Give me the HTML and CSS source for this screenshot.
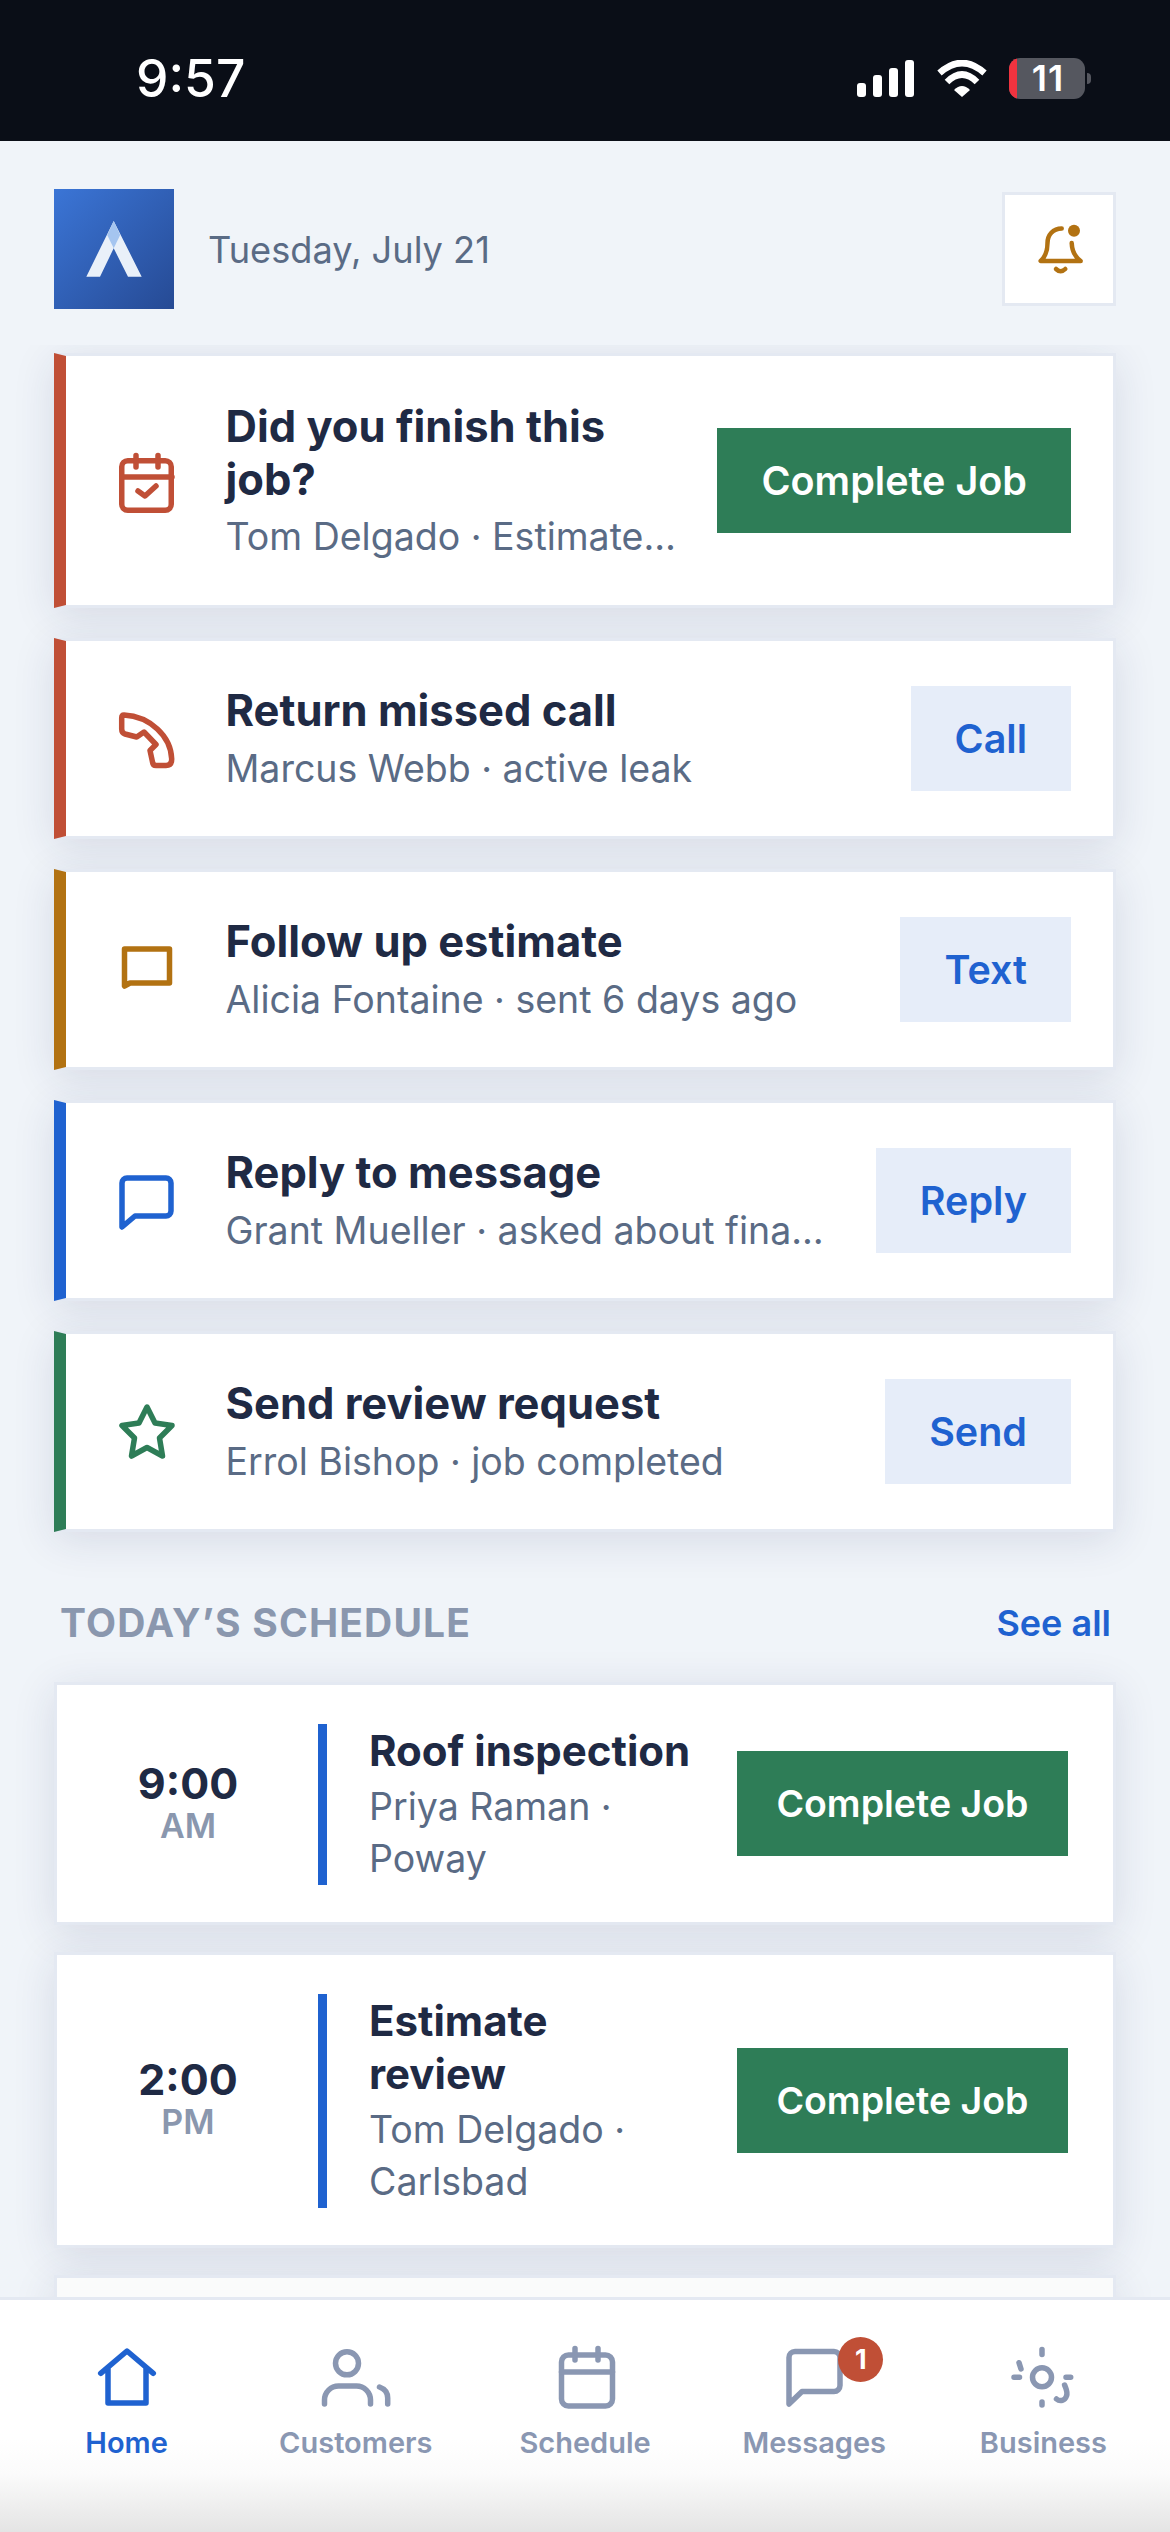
FILE: index.html
```html
<!DOCTYPE html>
<html lang="en">
<head>
    <meta charset="UTF-8">
    <meta name="viewport" content="width=device-width, initial-scale=1.0">
    <title>Home</title>
    <link rel="stylesheet" href="styles.css">
</head>
<body>
    <div class="statusbar">
        <span class="clock">9:57</span>
        <div class="status-icons">
            <div class="signal">
                <span class="bar bar1"></span>
                <span class="bar bar2"></span>
                <span class="bar bar3"></span>
                <span class="bar bar4"></span>
            </div>
            <svg class="wifi" width="50" height="37" viewBox="0 0 50 37">
                <path d="M2.5 13 Q25 -7 47.5 13" fill="none" stroke="#fff" stroke-width="6.5"/>
                <path d="M10 22 Q25 7 40 22" fill="none" stroke="#fff" stroke-width="6.5"/>
                <path d="M17 30 Q25 22 33 30 L25 37 Z" fill="#fff"/>
            </svg>
            <div class="battery"><span class="battery-low"></span><span class="battery-num">11</span></div>
            <span class="battery-nub"></span>
        </div>
    </div>

    <div class="header">
        <svg class="logo" width="120" height="120" viewBox="0 0 120 120">
            <defs>
                <linearGradient id="logoBg" x1="0" y1="0" x2="1" y2="1">
                    <stop offset="0" stop-color="#3b75d6"/>
                    <stop offset="1" stop-color="#264a94"/>
                </linearGradient>
            </defs>
            <rect width="120" height="120" fill="url(#logoBg)"/>
            <path d="M59.7 32 L87.7 87.7 H74 L59.7 59.3 L46 87.7 H32.3 Z" fill="#e9f0f9"/>
            <path d="M59.7 32 L66.2 46 L59.7 59.3 L53.2 46 Z" fill="#a5c5f0"/>
        </svg>
        <span class="date">Tuesday, July 21</span>
        <div class="bell-box">
            <svg class="ic bell amber" width="66" height="66" viewBox="0 0 66 66">
                <path d="M35.7 12.5 C27 12.5 21.5 19 21.5 27 C21.5 36 18 42 14.7 45 H54.7 C49 41 46 34 45.7 27"/>
                <path d="M30 53 Q34.7 57.5 39.3 53"/>
                <circle class="solid" cx="48" cy="14.7" r="6"/>
            </svg>
        </div>
    </div>

    <div class="content">
        <div class="task task-first red">
            <svg class="ic" width="66" height="66" viewBox="0 0 66 66">
                <rect x="7.75" y="12.75" width="49.5" height="49.5" rx="6"/>
                <path d="M22 7.5 V19 M44 7.5 V19 M8 29 H58"/>
                <path d="M24 43 L31 48 L42 38"/>
            </svg>
            <div class="info">
                <div class="title">Did you finish this job?</div>
                <div class="sub">Tom Delgado · Estimate review</div>
            </div>
            <button class="btn btn-green">Complete Job</button>
        </div>

        <div class="task red">
            <svg class="ic" width="66" height="66" viewBox="0 0 66 66">
                <path d="M10 9 C36 10.5 57 30 57.7 53 Q57.7 59.5 52 59.5 H42 Q39 59.5 38.5 56 L36 44.5 L42 38.5 L30 26 L22.7 31 L11 28 Q7.7 27 7.7 23 V12 Q7.7 9 10 9 Z"/>
            </svg>
            <div class="info">
                <div class="title">Return missed call</div>
                <div class="sub">Marcus Webb · active leak</div>
            </div>
            <button class="btn btn-light">Call</button>
        </div>

        <div class="task amber">
            <svg class="ic" width="66" height="66" viewBox="0 0 66 66">
                <path d="M10.5 12 H55.5 V46 H16 L10.5 49 Z"/>
            </svg>
            <div class="info">
                <div class="title">Follow up estimate</div>
                <div class="sub">Alicia Fontaine · sent 6 days ago</div>
            </div>
            <button class="btn btn-light">Text</button>
        </div>

        <div class="task blue">
            <svg class="ic" width="66" height="66" viewBox="0 0 66 66">
                <path d="M13 10 H52 a5 5 0 0 1 5 5 V43 a5 5 0 0 1 -5 5 H21 L8 59 V15 a5 5 0 0 1 5 -5 Z"/>
            </svg>
            <div class="info">
                <div class="title">Reply to message</div>
                <div class="sub">Grant Mueller · asked about financing</div>
            </div>
            <button class="btn btn-light">Reply</button>
        </div>

        <div class="task green">
            <svg class="ic" width="66" height="66" viewBox="0 0 66 66">
                <path d="M33 8 L41 24 L58 26.5 L45.5 39 L48.5 57 L33 48.5 L17.5 57 L20.5 39 L8 26.5 L25 24 Z"/>
            </svg>
            <div class="info">
                <div class="title">Send review request</div>
                <div class="sub">Errol Bishop · job completed</div>
            </div>
            <button class="btn btn-light">Send</button>
        </div>

        <div class="section-head">
            <span class="section-title">TODAY’S SCHEDULE</span>
            <a class="see-all">See all</a>
        </div>

        <div class="job">
            <div class="time">
                <div class="hour">9:00</div>
                <div class="ampm">AM</div>
            </div>
            <div class="job-info">
                <div class="title">Roof inspection</div>
                <div class="sub">Priya Raman · Poway</div>
            </div>
            <button class="btn btn-green btn-small">Complete Job</button>
        </div>

        <div class="job">
            <div class="time">
                <div class="hour">2:00</div>
                <div class="ampm">PM</div>
            </div>
            <div class="job-info">
                <div class="title">Estimate review</div>
                <div class="sub">Tom Delgado · Carlsbad</div>
            </div>
            <button class="btn btn-green btn-small">Complete Job</button>
        </div>

        <div class="job job-next"></div>
    </div>

    <div class="tabbar">
        <div class="tab active">
            <div class="tab-icon">
                <svg class="ic" width="72" height="72" viewBox="0 0 72 72">
                    <path d="M9.7 31.3 L36 9 L62.3 31.3 M17 26 V61 H55 V26"/>
                </svg>
            </div>
            <span>Home</span>
        </div>
        <div class="tab">
            <div class="tab-icon">
                <svg class="ic" width="72" height="72" viewBox="0 0 72 72">
                    <circle cx="27" cy="21.3" r="11.5"/>
                    <path d="M4.5 62 V58 a14 14 0 0 1 14 -14 h18 a14 14 0 0 1 14 14 v4"/>
                    <path d="M59.5 45 C65 47 67.7 51 67.7 56 V62"/>
                </svg>
            </div>
            <span>Customers</span>
        </div>
        <div class="tab">
            <div class="tab-icon">
                <svg class="ic" width="72" height="72" viewBox="0 0 72 72">
                    <rect x="12.5" y="13" width="51" height="51" rx="7"/>
                    <path d="M26 6.5 V18 M49 6.5 V18 M12.5 30 H63.5"/>
                </svg>
            </div>
            <span>Schedule</span>
        </div>
        <div class="tab">
            <div class="tab-icon">
                <svg class="ic" width="72" height="72" viewBox="0 0 72 72">
                    <path d="M17 9.5 H56 a6 6 0 0 1 6 6 V43.5 a6 6 0 0 1 -6 6 H24 L11 62 V15.5 a6 6 0 0 1 6 -6 Z"/>
                </svg>
                <span class="badge">1</span>
            </div>
            <span>Messages</span>
        </div>
        <div class="tab">
            <div class="tab-icon">
                <svg class="ic" width="72" height="72" viewBox="0 0 72 72">
                    <circle cx="35" cy="35.3" r="9.5"/>
                    <path d="M35 7.5 V12.5 M35 60 V63 M7 35.3 H12.5 M59 35.3 H63.7 M12 20.7 L14 27"/>
                    <path d="M57.6 43 C59 47 61 50 59.5 54 C58 58.5 53 60 49.5 57"/>
                </svg>
            </div>
            <span>Business</span>
        </div>
    </div>
</body>
</html>
```

FILE: styles.css
```css
* {
    box-sizing: border-box;
}
body {
    font-family: Inter, "Liberation Sans", sans-serif;
    display: flex;
    flex-direction: column;
    height: 100vh;
    margin: 0;
    overflow: hidden;
    background-color: #f0f4f9;
    color: #1f2a44;
}

/* status bar */
.statusbar {
    flex: none;
    height: 141px;
    padding: 15px 79px 0 136px;
    display: flex;
    align-items: center;
    justify-content: space-between;
    background-color: #0a0e17;
    color: white;
}
.clock {
    font-size: 51.5px;
    font-weight: 500;
}
.status-icons {
    display: flex;
    align-items: center;
}
.signal {
    display: flex;
    align-items: flex-end;
    gap: 6.5px;
    height: 37px;
    margin-right: 23px;
}
.bar {
    width: 9.5px;
    background-color: white;
    border-radius: 3px;
}
.bar1 { height: 14px; }
.bar2 { height: 22px; }
.bar3 { height: 29px; }
.bar4 { height: 37px; }
.wifi {
    margin-right: 22px;
}
.battery {
    position: relative;
    width: 76px;
    height: 41px;
    border-radius: 11px;
    overflow: hidden;
    background-color: #55575f;
    display: flex;
    align-items: center;
    justify-content: center;
}
.battery-low {
    position: absolute;
    left: 0;
    top: 0;
    bottom: 0;
    width: 8px;
    background-color: #f0333f;
}
.battery-num {
    font-size: 36px;
    font-weight: 600;
    letter-spacing: 1px;
    margin-left: 2px;
}
.battery-nub {
    width: 4px;
    height: 11px;
    margin-left: 2px;
    border-radius: 0 4px 4px 0;
    background-color: #55575f;
}

/* header */
.header {
    flex: none;
    position: relative;
    z-index: 2;
    padding: 48px 54px 36px;
    display: flex;
    align-items: center;
    background-color: #f0f4f9;
}
.logo {
    flex: none;
}
.date {
    flex: 1;
    margin: 2px 0 0 34px;
    font-size: 36.2px;
    color: #5a6b85;
}
.bell-box {
    width: 114px;
    height: 114px;
    display: flex;
    align-items: center;
    justify-content: center;
    background: white;
    border: 3px solid #e4e9f2;
}

/* icons */
.ic {
    flex: none;
    fill: none;
    stroke: currentColor;
    stroke-width: 5.5;
    stroke-linecap: round;
    stroke-linejoin: round;
}
.ic.bell {
    stroke-width: 4.5;
}
.ic .solid {
    fill: currentColor;
    stroke: none;
}
.amber { color: #b27212; }
.red { color: #c04f36; }
.blue { color: #1f62d0; }
.green { color: #2e7d57; }

/* scroll area */
.content {
    flex: 1;
    min-height: 0;
    overflow: hidden;
    padding: 8px 54px 0;
    background-color: #f0f4f9;
}
.task,
.job {
    display: flex;
    align-items: center;
    background: white;
    border: 3px solid #e4e9f2;
    box-shadow: 0 8px 40px rgba(30, 45, 90, 0.12);
}
.task {
    margin-bottom: 30px;
    padding: 45px 42px 45px 48px;
    border-left: 12px solid currentColor;
}
.task-first {
    min-height: 255px;
}
.task .info {
    flex: 1;
    min-width: 0;
    margin: -2px 38px -1px 45.5px;
}
.title {
    font-size: 42px;
    font-weight: 700;
    line-height: 53px;
    color: #1f2a44;
}
.task .title {
    font-size: 43.5px;
}
.sub {
    font-size: 37.5px;
    color: #5a6b85;
}
.task .sub {
    margin-top: 8.5px;
    line-height: 46px;
    white-space: nowrap;
    overflow: hidden;
    text-overflow: ellipsis;
}
.job .sub {
    margin-top: 4px;
    line-height: 52px;
}
.btn {
    flex: none;
    height: 105px;
    padding: 0 44px;
    border: none;
    font-family: inherit;
    font-size: 39.5px;
    font-weight: 600;
    cursor: pointer;
}
.btn-green {
    background-color: #2e7d57;
    color: white;
}
.btn-light {
    background-color: #e6edf9;
    color: #1f62d0;
}
.btn-small {
    padding: 0 39.5px;
    font-size: 37.5px;
}

/* schedule */
.section-head {
    display: flex;
    align-items: center;
    justify-content: space-between;
    height: 48px;
    margin: 66px 0 36px;
    padding: 0 5px 0 6px;
}
.section-title {
    font-size: 39px;
    font-weight: 700;
    letter-spacing: 0.03em;
    color: #8a97ae;
}
.see-all {
    margin-top: 2px;
    font-size: 36px;
    font-weight: 600;
    color: #1f62d0;
}
.job {
    margin-bottom: 27px;
    padding: 39px 45px 37px;
    align-items: stretch;
}
.time {
    flex: none;
    width: 172px;
    margin-right: 44px;
    padding-bottom: 8px;
    display: flex;
    flex-direction: column;
    align-items: center;
    justify-content: center;
}
.hour {
    font-size: 43px;
    font-weight: 700;
    line-height: 50px;
}
.ampm {
    font-size: 34px;
    font-weight: 600;
    line-height: 36px;
    color: #8a97ae;
}
.job-info {
    flex: 1;
    min-width: 0;
    margin-right: 45px;
    padding-left: 42px;
    border-left: 9px solid #1f62d0;
}
.job .btn {
    align-self: center;
    margin-bottom: 2px;
}
.job-next {
    height: 200px;
    background-color: #fafbfb;
}

/* bottom nav */
.tabbar {
    flex: none;
    position: relative;
    z-index: 2;
    height: 235px;
    padding: 42px 12px 0;
    display: flex;
    border-top: 3px solid #e4e9f2;
    background: linear-gradient(to bottom, #fff 60%, #fbfbfb 75%, #e4e4e4 100%);
}
.tab {
    flex: 1;
    display: flex;
    flex-direction: column;
    align-items: center;
    color: #8a97b2;
    font-size: 29px;
    font-weight: 600;
    line-height: 40px;
}
.tab.active {
    color: #1f62d0;
}
.tab-icon {
    position: relative;
    width: 72px;
    height: 72px;
    margin-bottom: 9px;
}
.badge {
    position: absolute;
    left: 60px;
    top: -5px;
    width: 45px;
    height: 45px;
    border-radius: 50%;
    background-color: #c04f36;
    color: white;
    font-size: 27px;
    font-weight: 700;
    line-height: 45px;
    text-align: center;
}
```
